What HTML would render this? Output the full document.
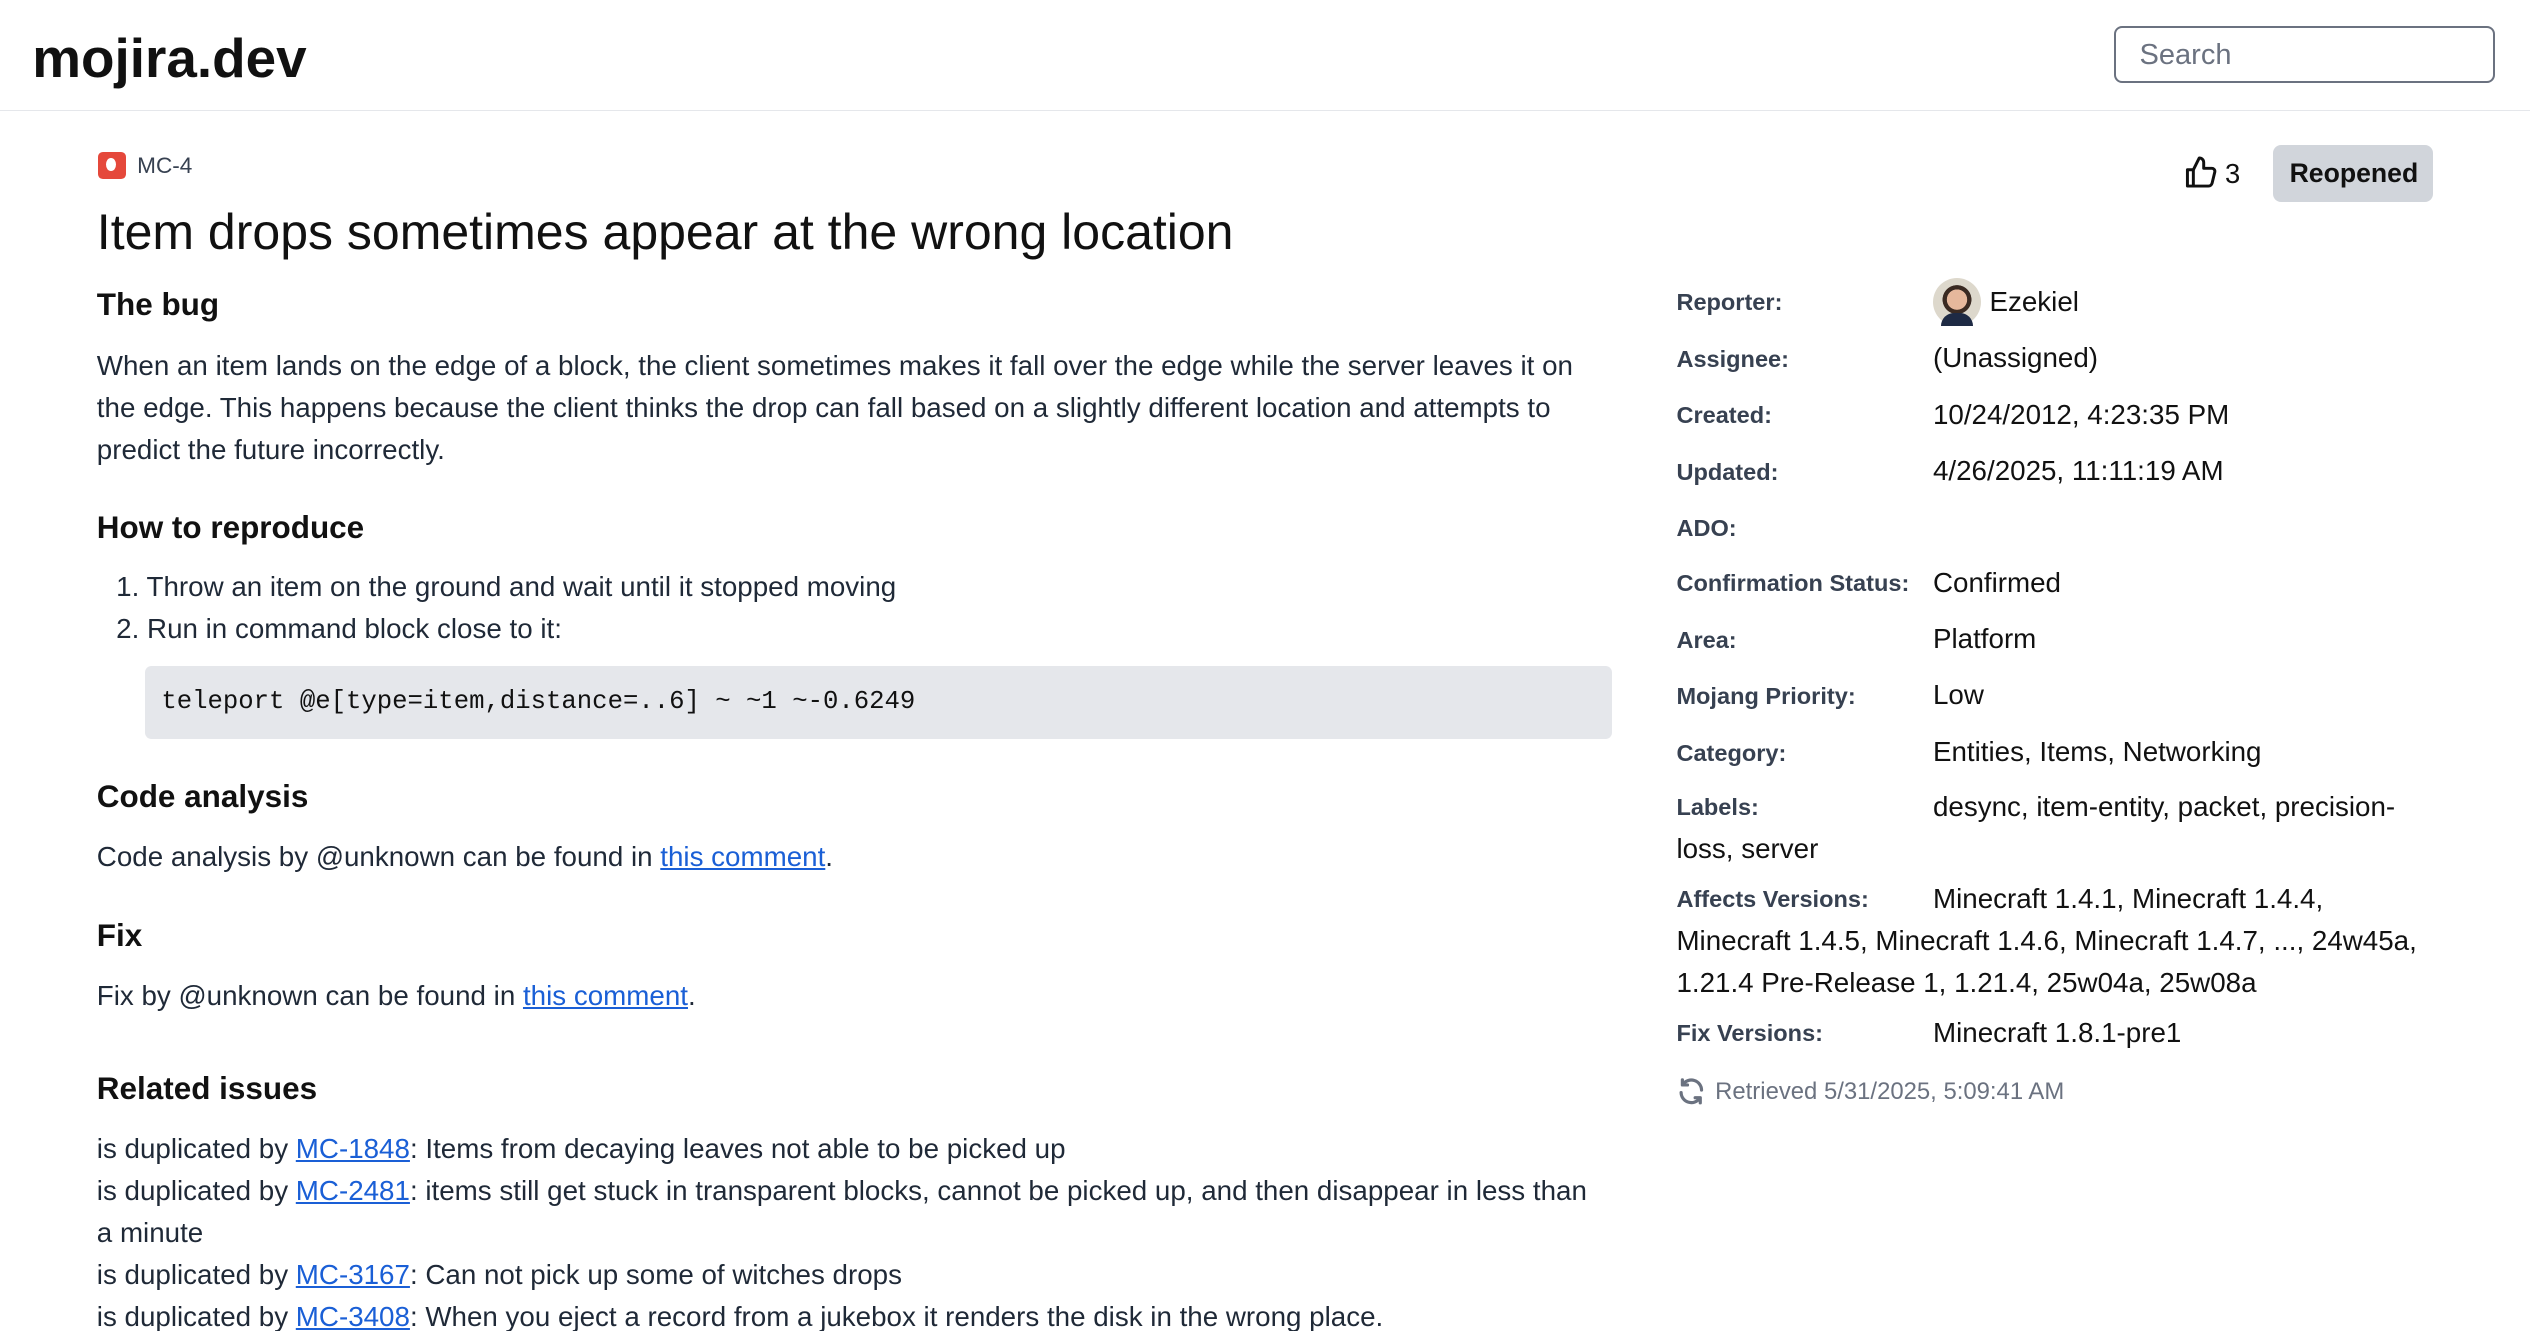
<!DOCTYPE html>
<html><head><meta charset="utf-8"><style>
html,body{margin:0;padding:0;background:#fff;overflow:hidden}
body{width:1568px;height:825px;zoom:1.61352;position:relative;font-family:"Liberation Sans",sans-serif;color:#1f2937}
.t{position:absolute;white-space:nowrap;line-height:26px;font-size:17.2px}
.h{position:absolute;white-space:nowrap;font-weight:bold;color:#111;line-height:26px;font-size:19.5px}
.l{position:absolute;left:1039px;white-space:nowrap;font-weight:bold;font-size:14.6px;color:#374151;line-height:26px}
.v{position:absolute;left:1198px;white-space:nowrap;font-size:17.2px;color:#111;line-height:26px}
a{color:#1a5fd6;text-decoration:underline}
</style></head><body>
<div style="position:absolute;left:0;top:0;width:1568px;height:68px;border-bottom:1px solid #e5e7eb"></div>
<div style="position:absolute;left:20px;top:16px;font-size:34px;font-weight:bold;color:#111;line-height:40px">mojira.dev</div>
<div style="position:absolute;left:1310px;top:16px;width:234px;height:33px;border:1.5px solid #6b7280;border-radius:5px"></div>
<div style="position:absolute;left:1326px;top:22px;font-size:18px;color:#6b7280;line-height:26px">Search</div>

<div style="position:absolute;left:61px;top:94px;width:17px;height:17px;background:#e5483b;border-radius:3px"></div>
<div style="position:absolute;left:66px;top:98px;width:6px;height:8px;background:#fff;border-radius:50%"></div>
<div class="t" style="left:85px;top:90px;font-size:14px;color:#374151">MC-4</div>
<div style="position:absolute;left:60px;top:124px;font-size:31px;color:#111;line-height:40px;white-space:nowrap">Item drops sometimes appear at the wrong location</div>

<svg style="position:absolute;left:1353px;top:96px" width="22" height="22" viewBox="0 0 24 24" fill="none" stroke="#111" stroke-width="2" stroke-linejoin="round"><path d="M7 10v11H3V10z"/><path d="M7 10l4-8c1.6 0 3 1.2 3 3v4h5.5c1.3 0 2.3 1.2 2 2.5l-1.8 7.5c-.3 1.2-1.3 2-2.5 2H7"/></svg>
<div class="t" style="left:1379px;top:95px;font-size:17px;color:#111">3</div>
<div style="position:absolute;left:1409px;top:90px;width:99px;height:35px;background:#d1d5db;border-radius:5px"></div>
<div class="t" style="left:1419px;top:95px;font-size:16.5px;font-weight:bold;color:#111">Reopened</div>

<div class="h" style="left:60px;top:176px">The bug</div>
<div class="t" style="left:60px;top:214px">When an item lands on the edge of a block, the client sometimes makes it fall over the edge while the server leaves it on</div>
<div class="t" style="left:60px;top:240px">the edge. This happens because the client thinks the drop can fall based on a slightly different location and attempts to</div>
<div class="t" style="left:60px;top:266px">predict the future incorrectly.</div>
<div class="h" style="left:60px;top:314px">How to reproduce</div>
<div class="t" style="left:72px;top:351px">1. Throw an item on the ground and wait until it stopped moving</div>
<div class="t" style="left:72px;top:377px">2. Run in command block close to it:</div>
<div style="position:absolute;left:90px;top:413px;width:909px;height:45px;background:#e5e7eb;border-radius:4px"></div>
<div class="t" style="left:100px;top:422px;font-family:'Liberation Mono',monospace;font-size:15.9px;color:#111">teleport @e[type=item,distance=..6] ~ ~1 ~-0.6249</div>
<div class="h" style="left:60px;top:481px">Code analysis</div>
<div class="t" style="left:60px;top:518px">Code analysis by @unknown can be found in <a>this comment</a>.</div>
<div class="h" style="left:60px;top:567px">Fix</div>
<div class="t" style="left:60px;top:604px">Fix by @unknown can be found in <a>this comment</a>.</div>
<div class="h" style="left:60px;top:662px">Related issues</div>
<div class="t" style="left:60px;top:699px">is duplicated by <a>MC-1848</a>: Items from decaying leaves not able to be picked up</div>
<div class="t" style="left:60px;top:725px">is duplicated by <a>MC-2481</a>: items still get stuck in transparent blocks, cannot be picked up, and then disappear in less than</div>
<div class="t" style="left:60px;top:751px">a minute</div>
<div class="t" style="left:60px;top:777px">is duplicated by <a>MC-3167</a>: Can not pick up some of witches drops</div>
<div class="t" style="left:60px;top:803px">is duplicated by <a>MC-3408</a>: When you eject a record from a jukebox it renders the disk in the wrong place.</div>

<div class="l" style="top:175px">Reporter:</div>
<div style="position:absolute;left:1198px;top:172px;width:30px;height:30px;border-radius:50%;background:radial-gradient(circle at 50% 45%,#e6b89c 0 28%,#3a2a22 29% 40%,#ddd8cc 41%)"></div>
<div style="position:absolute;left:1203px;top:194px;width:20px;height:8px;background:#1e2a44;border-radius:8px 8px 0 0"></div>
<div class="v" style="left:1233px;top:174px">Ezekiel</div>
<div class="l" style="top:210px">Assignee:</div><div class="v" style="top:209px">(Unassigned)</div>
<div class="l" style="top:245px">Created:</div><div class="v" style="top:244px">10/24/2012, 4:23:35 PM</div>
<div class="l" style="top:280px">Updated:</div><div class="v" style="top:279px">4/26/2025, 11:11:19 AM</div>
<div class="l" style="top:315px">ADO:</div>
<div class="l" style="top:349px">Confirmation Status:</div><div class="v" style="top:348px">Confirmed</div>
<div class="l" style="top:384px">Area:</div><div class="v" style="top:383px">Platform</div>
<div class="l" style="top:419px">Mojang Priority:</div><div class="v" style="top:418px">Low</div>
<div class="l" style="top:454px">Category:</div><div class="v" style="top:453px">Entities, Items, Networking</div>
<div class="l" style="top:488px">Labels:</div><div class="v" style="top:487px">desync, item-entity, packet, precision-</div>
<div class="v" style="left:1039px;top:513px">loss, server</div>
<div class="l" style="top:545px">Affects Versions:</div><div class="v" style="top:544px">Minecraft 1.4.1, Minecraft 1.4.4,</div>
<div class="v" style="left:1039px;top:570px">Minecraft 1.4.5, Minecraft 1.4.6, Minecraft 1.4.7, ..., 24w45a,</div>
<div class="v" style="left:1039px;top:596px">1.21.4 Pre-Release 1, 1.21.4, 25w04a, 25w08a</div>
<div class="l" style="top:628px">Fix Versions:</div><div class="v" style="top:627px">Minecraft 1.8.1-pre1</div>
<svg style="position:absolute;left:1039px;top:667px" width="19" height="19" viewBox="0 0 24 24" fill="none" stroke="#6b7280" stroke-width="2.5" stroke-linecap="round"><path d="M20 11a8 8 0 0 0-14.5-4.5"/><path d="M4 13a8 8 0 0 0 14.5 4.5"/><path d="M5 3v4h4" stroke-linejoin="round"/><path d="M19 21v-4h-4" stroke-linejoin="round"/></svg>
<div class="t" style="left:1063px;top:664px;font-size:14.8px;color:#6b7280">Retrieved 5/31/2025, 5:09:41 AM</div>
</body></html>
